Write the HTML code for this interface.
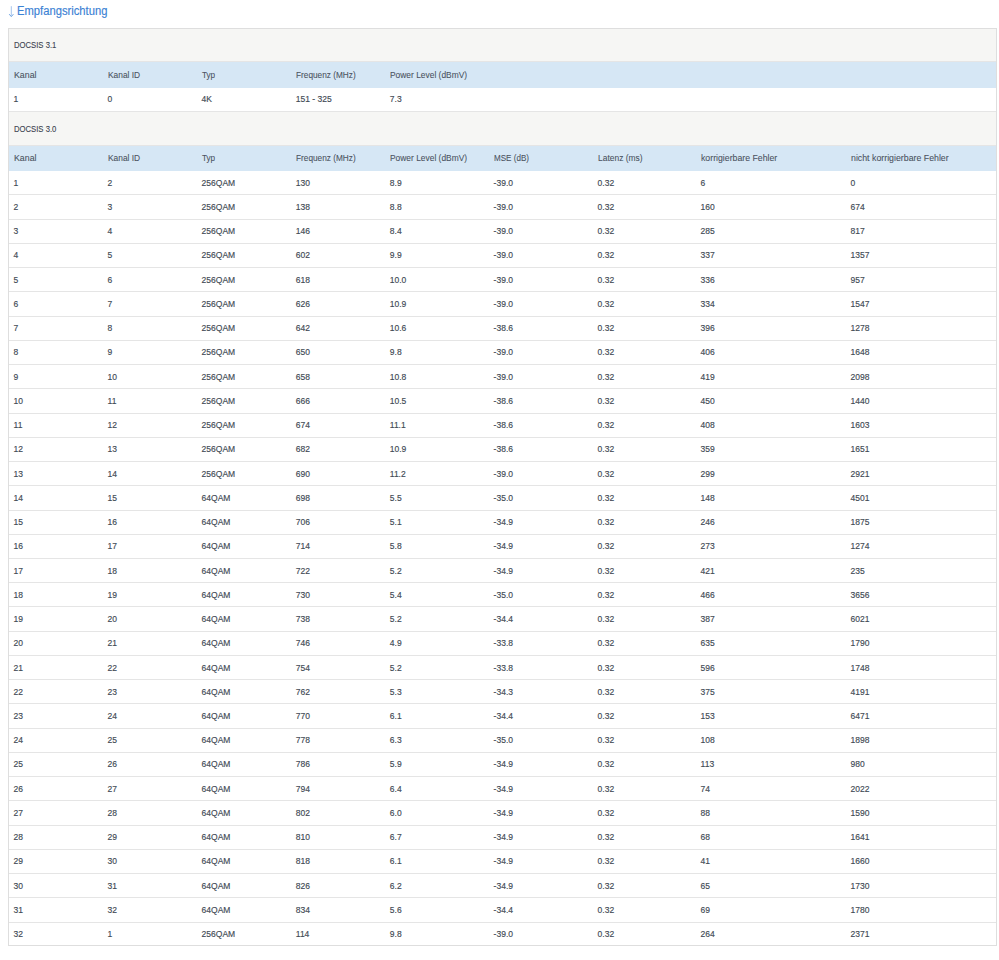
<!DOCTYPE html>
<html><head><meta charset="utf-8"><title>Empfangsrichtung</title><style>
html,body{margin:0;padding:0;background:#fff;}
body{width:999px;height:960px;overflow:hidden;position:relative;font-family:"Liberation Sans",sans-serif;}
.box{position:absolute;left:8px;top:28px;width:987px;height:916px;border:1px solid #dedede;}
.sec,.hd,.rw{position:absolute;left:9px;width:987px;}
.sec{background:#f6f6f4;}
.hd{background:#d6e7f5;}
.rw{background:#fff;}
.ln,.ln2{position:absolute;left:9px;width:987px;height:1px;background:#e5e5e5;}
.ln2{background:#e5e5e5;}
.title,.st,.ht,.dt{position:absolute;white-space:nowrap;line-height:0;height:0;transform-origin:0 0;}
.title{font-size:12px;color:#3b82d4;letter-spacing:0px;-webkit-text-stroke:0.15px #3b82d4;}
.arr{display:inline-block;margin-right:1px;font-size:12px;}
.st{font-size:9.5px;color:#3c4450;letter-spacing:0px;-webkit-text-stroke:0.12px #3c4450;}
.ht{font-size:9.5px;color:#4a5260;letter-spacing:0px;-webkit-text-stroke:0.08px #4a5260;}
.dt{font-size:8.5px;color:#414a54;letter-spacing:0px;-webkit-text-stroke:0.15px #414a54;}
</style></head>
<body>
<svg class="arrow" width="8" height="14" viewBox="0 0 8 14" style="position:absolute;left:7px;top:4px"><path d="M4.3 2.2V11.5" stroke="#9bbdea" stroke-width="0.9" fill="none"/><path d="M2.2 10.2L4.3 12.6L6.4 10.2" stroke="#5b96de" stroke-width="0.9" fill="none" stroke-linejoin="round"/></svg>
<div class="title" style="left:16.6px;top:11.4px;transform:scaleX(0.935)">Empfangsrichtung</div>
<div class="box"></div>
<div class="sec" style="top:29px;height:32px"></div>
<div class="st" style="left:13.6px;top:45.0px;transform:scaleX(0.81)">DOCSIS 3.1</div>
<div class="ln2" style="top:61px"></div>
<div class="hd" style="top:62px;height:26px"></div>
<div class="ht" style="left:13.6px;top:74.7px;transform:scaleX(0.925)">Kanal</div>
<div class="ht" style="left:107.6px;top:74.7px;transform:scaleX(0.883)">Kanal ID</div>
<div class="ht" style="left:201.6px;top:74.7px;transform:scaleX(0.86)">Typ</div>
<div class="ht" style="left:295.8px;top:74.7px;transform:scaleX(0.87)">Frequenz (MHz)</div>
<div class="ht" style="left:389.8px;top:74.7px;transform:scaleX(0.885)">Power Level (dBmV)</div>
<div class="rw" style="top:88px;height:23px"></div>
<div class="dt" style="left:13.6px;top:99px">1</div>
<div class="dt" style="left:107.6px;top:99px">0</div>
<div class="dt" style="left:201.6px;top:99px">4K</div>
<div class="dt" style="left:295.8px;top:99px">151 - 325</div>
<div class="dt" style="left:389.8px;top:99px">7.3</div>
<div class="ln" style="top:111px"></div>
<div class="sec" style="top:112px;height:33px"></div>
<div class="st" style="left:13.6px;top:129.2px;transform:scaleX(0.81)">DOCSIS 3.0</div>
<div class="ln2" style="top:145px"></div>
<div class="hd" style="top:146px;height:25px"></div>
<div class="ht" style="left:13.6px;top:158.3px;transform:scaleX(0.925)">Kanal</div>
<div class="ht" style="left:107.6px;top:158.3px;transform:scaleX(0.883)">Kanal ID</div>
<div class="ht" style="left:201.6px;top:158.3px;transform:scaleX(0.86)">Typ</div>
<div class="ht" style="left:295.8px;top:158.3px;transform:scaleX(0.87)">Frequenz (MHz)</div>
<div class="ht" style="left:389.8px;top:158.3px;transform:scaleX(0.885)">Power Level (dBmV)</div>
<div class="ht" style="left:493.6px;top:158.3px;transform:scaleX(0.85)">MSE (dB)</div>
<div class="ht" style="left:597.6px;top:158.3px;transform:scaleX(0.89)">Latenz (ms)</div>
<div class="ht" style="left:700.6px;top:158.3px;transform:scaleX(0.92)">korrigierbare Fehler</div>
<div class="ht" style="left:850.6px;top:158.3px;transform:scaleX(0.925)">nicht korrigierbare Fehler</div>
<div class="dt" style="left:13.6px;top:182.7px">1</div>
<div class="dt" style="left:107.6px;top:182.7px">2</div>
<div class="dt" style="left:201.6px;top:182.7px">256QAM</div>
<div class="dt" style="left:295.8px;top:182.7px">130</div>
<div class="dt" style="left:389.8px;top:182.7px">8.9</div>
<div class="dt" style="left:493.6px;top:182.7px">-39.0</div>
<div class="dt" style="left:597.6px;top:182.7px">0.32</div>
<div class="dt" style="left:700.6px;top:182.7px">6</div>
<div class="dt" style="left:850.6px;top:182.7px">0</div>
<div class="ln" style="top:194.4px"></div>
<div class="dt" style="left:13.6px;top:206.94px">2</div>
<div class="dt" style="left:107.6px;top:206.94px">3</div>
<div class="dt" style="left:201.6px;top:206.94px">256QAM</div>
<div class="dt" style="left:295.8px;top:206.94px">138</div>
<div class="dt" style="left:389.8px;top:206.94px">8.8</div>
<div class="dt" style="left:493.6px;top:206.94px">-39.0</div>
<div class="dt" style="left:597.6px;top:206.94px">0.32</div>
<div class="dt" style="left:700.6px;top:206.94px">160</div>
<div class="dt" style="left:850.6px;top:206.94px">674</div>
<div class="ln" style="top:218.64px"></div>
<div class="dt" style="left:13.6px;top:231.18px">3</div>
<div class="dt" style="left:107.6px;top:231.18px">4</div>
<div class="dt" style="left:201.6px;top:231.18px">256QAM</div>
<div class="dt" style="left:295.8px;top:231.18px">146</div>
<div class="dt" style="left:389.8px;top:231.18px">8.4</div>
<div class="dt" style="left:493.6px;top:231.18px">-39.0</div>
<div class="dt" style="left:597.6px;top:231.18px">0.32</div>
<div class="dt" style="left:700.6px;top:231.18px">285</div>
<div class="dt" style="left:850.6px;top:231.18px">817</div>
<div class="ln" style="top:242.88px"></div>
<div class="dt" style="left:13.6px;top:255.42px">4</div>
<div class="dt" style="left:107.6px;top:255.42px">5</div>
<div class="dt" style="left:201.6px;top:255.42px">256QAM</div>
<div class="dt" style="left:295.8px;top:255.42px">602</div>
<div class="dt" style="left:389.8px;top:255.42px">9.9</div>
<div class="dt" style="left:493.6px;top:255.42px">-39.0</div>
<div class="dt" style="left:597.6px;top:255.42px">0.32</div>
<div class="dt" style="left:700.6px;top:255.42px">337</div>
<div class="dt" style="left:850.6px;top:255.42px">1357</div>
<div class="ln" style="top:267.12px"></div>
<div class="dt" style="left:13.6px;top:279.66px">5</div>
<div class="dt" style="left:107.6px;top:279.66px">6</div>
<div class="dt" style="left:201.6px;top:279.66px">256QAM</div>
<div class="dt" style="left:295.8px;top:279.66px">618</div>
<div class="dt" style="left:389.8px;top:279.66px">10.0</div>
<div class="dt" style="left:493.6px;top:279.66px">-39.0</div>
<div class="dt" style="left:597.6px;top:279.66px">0.32</div>
<div class="dt" style="left:700.6px;top:279.66px">336</div>
<div class="dt" style="left:850.6px;top:279.66px">957</div>
<div class="ln" style="top:291.36px"></div>
<div class="dt" style="left:13.6px;top:303.9px">6</div>
<div class="dt" style="left:107.6px;top:303.9px">7</div>
<div class="dt" style="left:201.6px;top:303.9px">256QAM</div>
<div class="dt" style="left:295.8px;top:303.9px">626</div>
<div class="dt" style="left:389.8px;top:303.9px">10.9</div>
<div class="dt" style="left:493.6px;top:303.9px">-39.0</div>
<div class="dt" style="left:597.6px;top:303.9px">0.32</div>
<div class="dt" style="left:700.6px;top:303.9px">334</div>
<div class="dt" style="left:850.6px;top:303.9px">1547</div>
<div class="ln" style="top:315.6px"></div>
<div class="dt" style="left:13.6px;top:328.14px">7</div>
<div class="dt" style="left:107.6px;top:328.14px">8</div>
<div class="dt" style="left:201.6px;top:328.14px">256QAM</div>
<div class="dt" style="left:295.8px;top:328.14px">642</div>
<div class="dt" style="left:389.8px;top:328.14px">10.6</div>
<div class="dt" style="left:493.6px;top:328.14px">-38.6</div>
<div class="dt" style="left:597.6px;top:328.14px">0.32</div>
<div class="dt" style="left:700.6px;top:328.14px">396</div>
<div class="dt" style="left:850.6px;top:328.14px">1278</div>
<div class="ln" style="top:339.84px"></div>
<div class="dt" style="left:13.6px;top:352.38px">8</div>
<div class="dt" style="left:107.6px;top:352.38px">9</div>
<div class="dt" style="left:201.6px;top:352.38px">256QAM</div>
<div class="dt" style="left:295.8px;top:352.38px">650</div>
<div class="dt" style="left:389.8px;top:352.38px">9.8</div>
<div class="dt" style="left:493.6px;top:352.38px">-39.0</div>
<div class="dt" style="left:597.6px;top:352.38px">0.32</div>
<div class="dt" style="left:700.6px;top:352.38px">406</div>
<div class="dt" style="left:850.6px;top:352.38px">1648</div>
<div class="ln" style="top:364.08px"></div>
<div class="dt" style="left:13.6px;top:376.62px">9</div>
<div class="dt" style="left:107.6px;top:376.62px">10</div>
<div class="dt" style="left:201.6px;top:376.62px">256QAM</div>
<div class="dt" style="left:295.8px;top:376.62px">658</div>
<div class="dt" style="left:389.8px;top:376.62px">10.8</div>
<div class="dt" style="left:493.6px;top:376.62px">-39.0</div>
<div class="dt" style="left:597.6px;top:376.62px">0.32</div>
<div class="dt" style="left:700.6px;top:376.62px">419</div>
<div class="dt" style="left:850.6px;top:376.62px">2098</div>
<div class="ln" style="top:388.32px"></div>
<div class="dt" style="left:13.6px;top:400.86px">10</div>
<div class="dt" style="left:107.6px;top:400.86px">11</div>
<div class="dt" style="left:201.6px;top:400.86px">256QAM</div>
<div class="dt" style="left:295.8px;top:400.86px">666</div>
<div class="dt" style="left:389.8px;top:400.86px">10.5</div>
<div class="dt" style="left:493.6px;top:400.86px">-38.6</div>
<div class="dt" style="left:597.6px;top:400.86px">0.32</div>
<div class="dt" style="left:700.6px;top:400.86px">450</div>
<div class="dt" style="left:850.6px;top:400.86px">1440</div>
<div class="ln" style="top:412.56px"></div>
<div class="dt" style="left:13.6px;top:425.1px">11</div>
<div class="dt" style="left:107.6px;top:425.1px">12</div>
<div class="dt" style="left:201.6px;top:425.1px">256QAM</div>
<div class="dt" style="left:295.8px;top:425.1px">674</div>
<div class="dt" style="left:389.8px;top:425.1px">11.1</div>
<div class="dt" style="left:493.6px;top:425.1px">-38.6</div>
<div class="dt" style="left:597.6px;top:425.1px">0.32</div>
<div class="dt" style="left:700.6px;top:425.1px">408</div>
<div class="dt" style="left:850.6px;top:425.1px">1603</div>
<div class="ln" style="top:436.8px"></div>
<div class="dt" style="left:13.6px;top:449.34px">12</div>
<div class="dt" style="left:107.6px;top:449.34px">13</div>
<div class="dt" style="left:201.6px;top:449.34px">256QAM</div>
<div class="dt" style="left:295.8px;top:449.34px">682</div>
<div class="dt" style="left:389.8px;top:449.34px">10.9</div>
<div class="dt" style="left:493.6px;top:449.34px">-38.6</div>
<div class="dt" style="left:597.6px;top:449.34px">0.32</div>
<div class="dt" style="left:700.6px;top:449.34px">359</div>
<div class="dt" style="left:850.6px;top:449.34px">1651</div>
<div class="ln" style="top:461.04px"></div>
<div class="dt" style="left:13.6px;top:473.58px">13</div>
<div class="dt" style="left:107.6px;top:473.58px">14</div>
<div class="dt" style="left:201.6px;top:473.58px">256QAM</div>
<div class="dt" style="left:295.8px;top:473.58px">690</div>
<div class="dt" style="left:389.8px;top:473.58px">11.2</div>
<div class="dt" style="left:493.6px;top:473.58px">-39.0</div>
<div class="dt" style="left:597.6px;top:473.58px">0.32</div>
<div class="dt" style="left:700.6px;top:473.58px">299</div>
<div class="dt" style="left:850.6px;top:473.58px">2921</div>
<div class="ln" style="top:485.28px"></div>
<div class="dt" style="left:13.6px;top:497.82px">14</div>
<div class="dt" style="left:107.6px;top:497.82px">15</div>
<div class="dt" style="left:201.6px;top:497.82px">64QAM</div>
<div class="dt" style="left:295.8px;top:497.82px">698</div>
<div class="dt" style="left:389.8px;top:497.82px">5.5</div>
<div class="dt" style="left:493.6px;top:497.82px">-35.0</div>
<div class="dt" style="left:597.6px;top:497.82px">0.32</div>
<div class="dt" style="left:700.6px;top:497.82px">148</div>
<div class="dt" style="left:850.6px;top:497.82px">4501</div>
<div class="ln" style="top:509.52px"></div>
<div class="dt" style="left:13.6px;top:522.06px">15</div>
<div class="dt" style="left:107.6px;top:522.06px">16</div>
<div class="dt" style="left:201.6px;top:522.06px">64QAM</div>
<div class="dt" style="left:295.8px;top:522.06px">706</div>
<div class="dt" style="left:389.8px;top:522.06px">5.1</div>
<div class="dt" style="left:493.6px;top:522.06px">-34.9</div>
<div class="dt" style="left:597.6px;top:522.06px">0.32</div>
<div class="dt" style="left:700.6px;top:522.06px">246</div>
<div class="dt" style="left:850.6px;top:522.06px">1875</div>
<div class="ln" style="top:533.76px"></div>
<div class="dt" style="left:13.6px;top:546.3px">16</div>
<div class="dt" style="left:107.6px;top:546.3px">17</div>
<div class="dt" style="left:201.6px;top:546.3px">64QAM</div>
<div class="dt" style="left:295.8px;top:546.3px">714</div>
<div class="dt" style="left:389.8px;top:546.3px">5.8</div>
<div class="dt" style="left:493.6px;top:546.3px">-34.9</div>
<div class="dt" style="left:597.6px;top:546.3px">0.32</div>
<div class="dt" style="left:700.6px;top:546.3px">273</div>
<div class="dt" style="left:850.6px;top:546.3px">1274</div>
<div class="ln" style="top:558.0px"></div>
<div class="dt" style="left:13.6px;top:570.54px">17</div>
<div class="dt" style="left:107.6px;top:570.54px">18</div>
<div class="dt" style="left:201.6px;top:570.54px">64QAM</div>
<div class="dt" style="left:295.8px;top:570.54px">722</div>
<div class="dt" style="left:389.8px;top:570.54px">5.2</div>
<div class="dt" style="left:493.6px;top:570.54px">-34.9</div>
<div class="dt" style="left:597.6px;top:570.54px">0.32</div>
<div class="dt" style="left:700.6px;top:570.54px">421</div>
<div class="dt" style="left:850.6px;top:570.54px">235</div>
<div class="ln" style="top:582.24px"></div>
<div class="dt" style="left:13.6px;top:594.78px">18</div>
<div class="dt" style="left:107.6px;top:594.78px">19</div>
<div class="dt" style="left:201.6px;top:594.78px">64QAM</div>
<div class="dt" style="left:295.8px;top:594.78px">730</div>
<div class="dt" style="left:389.8px;top:594.78px">5.4</div>
<div class="dt" style="left:493.6px;top:594.78px">-35.0</div>
<div class="dt" style="left:597.6px;top:594.78px">0.32</div>
<div class="dt" style="left:700.6px;top:594.78px">466</div>
<div class="dt" style="left:850.6px;top:594.78px">3656</div>
<div class="ln" style="top:606.48px"></div>
<div class="dt" style="left:13.6px;top:619.02px">19</div>
<div class="dt" style="left:107.6px;top:619.02px">20</div>
<div class="dt" style="left:201.6px;top:619.02px">64QAM</div>
<div class="dt" style="left:295.8px;top:619.02px">738</div>
<div class="dt" style="left:389.8px;top:619.02px">5.2</div>
<div class="dt" style="left:493.6px;top:619.02px">-34.4</div>
<div class="dt" style="left:597.6px;top:619.02px">0.32</div>
<div class="dt" style="left:700.6px;top:619.02px">387</div>
<div class="dt" style="left:850.6px;top:619.02px">6021</div>
<div class="ln" style="top:630.72px"></div>
<div class="dt" style="left:13.6px;top:643.26px">20</div>
<div class="dt" style="left:107.6px;top:643.26px">21</div>
<div class="dt" style="left:201.6px;top:643.26px">64QAM</div>
<div class="dt" style="left:295.8px;top:643.26px">746</div>
<div class="dt" style="left:389.8px;top:643.26px">4.9</div>
<div class="dt" style="left:493.6px;top:643.26px">-33.8</div>
<div class="dt" style="left:597.6px;top:643.26px">0.32</div>
<div class="dt" style="left:700.6px;top:643.26px">635</div>
<div class="dt" style="left:850.6px;top:643.26px">1790</div>
<div class="ln" style="top:654.96px"></div>
<div class="dt" style="left:13.6px;top:667.5px">21</div>
<div class="dt" style="left:107.6px;top:667.5px">22</div>
<div class="dt" style="left:201.6px;top:667.5px">64QAM</div>
<div class="dt" style="left:295.8px;top:667.5px">754</div>
<div class="dt" style="left:389.8px;top:667.5px">5.2</div>
<div class="dt" style="left:493.6px;top:667.5px">-33.8</div>
<div class="dt" style="left:597.6px;top:667.5px">0.32</div>
<div class="dt" style="left:700.6px;top:667.5px">596</div>
<div class="dt" style="left:850.6px;top:667.5px">1748</div>
<div class="ln" style="top:679.2px"></div>
<div class="dt" style="left:13.6px;top:691.74px">22</div>
<div class="dt" style="left:107.6px;top:691.74px">23</div>
<div class="dt" style="left:201.6px;top:691.74px">64QAM</div>
<div class="dt" style="left:295.8px;top:691.74px">762</div>
<div class="dt" style="left:389.8px;top:691.74px">5.3</div>
<div class="dt" style="left:493.6px;top:691.74px">-34.3</div>
<div class="dt" style="left:597.6px;top:691.74px">0.32</div>
<div class="dt" style="left:700.6px;top:691.74px">375</div>
<div class="dt" style="left:850.6px;top:691.74px">4191</div>
<div class="ln" style="top:703.44px"></div>
<div class="dt" style="left:13.6px;top:715.98px">23</div>
<div class="dt" style="left:107.6px;top:715.98px">24</div>
<div class="dt" style="left:201.6px;top:715.98px">64QAM</div>
<div class="dt" style="left:295.8px;top:715.98px">770</div>
<div class="dt" style="left:389.8px;top:715.98px">6.1</div>
<div class="dt" style="left:493.6px;top:715.98px">-34.4</div>
<div class="dt" style="left:597.6px;top:715.98px">0.32</div>
<div class="dt" style="left:700.6px;top:715.98px">153</div>
<div class="dt" style="left:850.6px;top:715.98px">6471</div>
<div class="ln" style="top:727.68px"></div>
<div class="dt" style="left:13.6px;top:740.22px">24</div>
<div class="dt" style="left:107.6px;top:740.22px">25</div>
<div class="dt" style="left:201.6px;top:740.22px">64QAM</div>
<div class="dt" style="left:295.8px;top:740.22px">778</div>
<div class="dt" style="left:389.8px;top:740.22px">6.3</div>
<div class="dt" style="left:493.6px;top:740.22px">-35.0</div>
<div class="dt" style="left:597.6px;top:740.22px">0.32</div>
<div class="dt" style="left:700.6px;top:740.22px">108</div>
<div class="dt" style="left:850.6px;top:740.22px">1898</div>
<div class="ln" style="top:751.92px"></div>
<div class="dt" style="left:13.6px;top:764.46px">25</div>
<div class="dt" style="left:107.6px;top:764.46px">26</div>
<div class="dt" style="left:201.6px;top:764.46px">64QAM</div>
<div class="dt" style="left:295.8px;top:764.46px">786</div>
<div class="dt" style="left:389.8px;top:764.46px">5.9</div>
<div class="dt" style="left:493.6px;top:764.46px">-34.9</div>
<div class="dt" style="left:597.6px;top:764.46px">0.32</div>
<div class="dt" style="left:700.6px;top:764.46px">113</div>
<div class="dt" style="left:850.6px;top:764.46px">980</div>
<div class="ln" style="top:776.16px"></div>
<div class="dt" style="left:13.6px;top:788.7px">26</div>
<div class="dt" style="left:107.6px;top:788.7px">27</div>
<div class="dt" style="left:201.6px;top:788.7px">64QAM</div>
<div class="dt" style="left:295.8px;top:788.7px">794</div>
<div class="dt" style="left:389.8px;top:788.7px">6.4</div>
<div class="dt" style="left:493.6px;top:788.7px">-34.9</div>
<div class="dt" style="left:597.6px;top:788.7px">0.32</div>
<div class="dt" style="left:700.6px;top:788.7px">74</div>
<div class="dt" style="left:850.6px;top:788.7px">2022</div>
<div class="ln" style="top:800.4px"></div>
<div class="dt" style="left:13.6px;top:812.94px">27</div>
<div class="dt" style="left:107.6px;top:812.94px">28</div>
<div class="dt" style="left:201.6px;top:812.94px">64QAM</div>
<div class="dt" style="left:295.8px;top:812.94px">802</div>
<div class="dt" style="left:389.8px;top:812.94px">6.0</div>
<div class="dt" style="left:493.6px;top:812.94px">-34.9</div>
<div class="dt" style="left:597.6px;top:812.94px">0.32</div>
<div class="dt" style="left:700.6px;top:812.94px">88</div>
<div class="dt" style="left:850.6px;top:812.94px">1590</div>
<div class="ln" style="top:824.64px"></div>
<div class="dt" style="left:13.6px;top:837.18px">28</div>
<div class="dt" style="left:107.6px;top:837.18px">29</div>
<div class="dt" style="left:201.6px;top:837.18px">64QAM</div>
<div class="dt" style="left:295.8px;top:837.18px">810</div>
<div class="dt" style="left:389.8px;top:837.18px">6.7</div>
<div class="dt" style="left:493.6px;top:837.18px">-34.9</div>
<div class="dt" style="left:597.6px;top:837.18px">0.32</div>
<div class="dt" style="left:700.6px;top:837.18px">68</div>
<div class="dt" style="left:850.6px;top:837.18px">1641</div>
<div class="ln" style="top:848.88px"></div>
<div class="dt" style="left:13.6px;top:861.42px">29</div>
<div class="dt" style="left:107.6px;top:861.42px">30</div>
<div class="dt" style="left:201.6px;top:861.42px">64QAM</div>
<div class="dt" style="left:295.8px;top:861.42px">818</div>
<div class="dt" style="left:389.8px;top:861.42px">6.1</div>
<div class="dt" style="left:493.6px;top:861.42px">-34.9</div>
<div class="dt" style="left:597.6px;top:861.42px">0.32</div>
<div class="dt" style="left:700.6px;top:861.42px">41</div>
<div class="dt" style="left:850.6px;top:861.42px">1660</div>
<div class="ln" style="top:873.12px"></div>
<div class="dt" style="left:13.6px;top:885.66px">30</div>
<div class="dt" style="left:107.6px;top:885.66px">31</div>
<div class="dt" style="left:201.6px;top:885.66px">64QAM</div>
<div class="dt" style="left:295.8px;top:885.66px">826</div>
<div class="dt" style="left:389.8px;top:885.66px">6.2</div>
<div class="dt" style="left:493.6px;top:885.66px">-34.9</div>
<div class="dt" style="left:597.6px;top:885.66px">0.32</div>
<div class="dt" style="left:700.6px;top:885.66px">65</div>
<div class="dt" style="left:850.6px;top:885.66px">1730</div>
<div class="ln" style="top:897.36px"></div>
<div class="dt" style="left:13.6px;top:909.9px">31</div>
<div class="dt" style="left:107.6px;top:909.9px">32</div>
<div class="dt" style="left:201.6px;top:909.9px">64QAM</div>
<div class="dt" style="left:295.8px;top:909.9px">834</div>
<div class="dt" style="left:389.8px;top:909.9px">5.6</div>
<div class="dt" style="left:493.6px;top:909.9px">-34.4</div>
<div class="dt" style="left:597.6px;top:909.9px">0.32</div>
<div class="dt" style="left:700.6px;top:909.9px">69</div>
<div class="dt" style="left:850.6px;top:909.9px">1780</div>
<div class="ln" style="top:921.6px"></div>
<div class="dt" style="left:13.6px;top:934.14px">32</div>
<div class="dt" style="left:107.6px;top:934.14px">1</div>
<div class="dt" style="left:201.6px;top:934.14px">256QAM</div>
<div class="dt" style="left:295.8px;top:934.14px">114</div>
<div class="dt" style="left:389.8px;top:934.14px">9.8</div>
<div class="dt" style="left:493.6px;top:934.14px">-39.0</div>
<div class="dt" style="left:597.6px;top:934.14px">0.32</div>
<div class="dt" style="left:700.6px;top:934.14px">264</div>
<div class="dt" style="left:850.6px;top:934.14px">2371</div>
</body></html>
